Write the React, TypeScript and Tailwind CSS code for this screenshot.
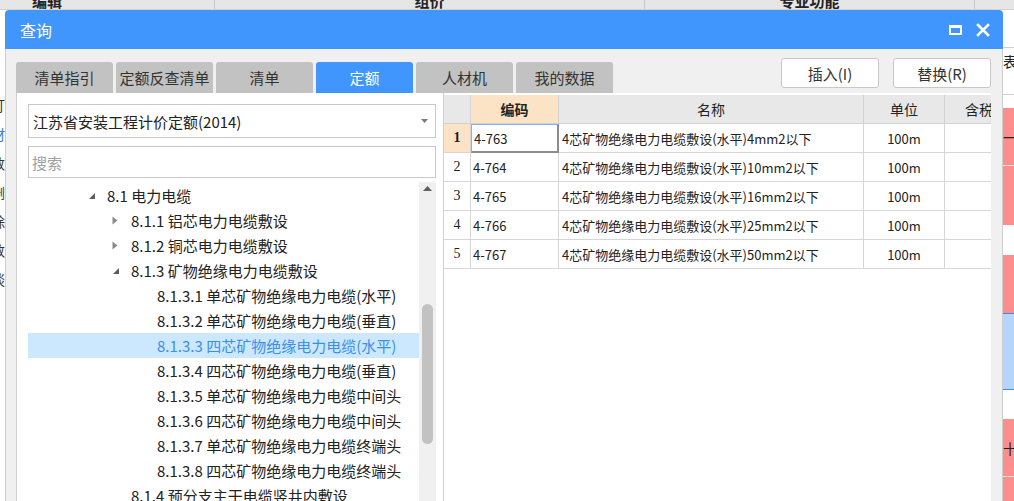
type Tri = 'down' | 'right' | 'none';

const tabs = ['清单指引', '定额反查清单', '清单', '定额', '人材机', '我的数据'];

const tree: { pl: string; tri: Tri; text: string; selected?: boolean }[] = [
  { pl: 'pl-[57px]', tri: 'down', text: '8.1 电力电缆' },
  { pl: 'pl-[81px]', tri: 'right', text: '8.1.1 铝芯电力电缆敷设' },
  { pl: 'pl-[81px]', tri: 'right', text: '8.1.2 铜芯电力电缆敷设' },
  { pl: 'pl-[81px]', tri: 'down', text: '8.1.3 矿物绝缘电力电缆敷设' },
  { pl: 'pl-[129px]', tri: 'none', text: '8.1.3.1 单芯矿物绝缘电力电缆(水平)' },
  { pl: 'pl-[129px]', tri: 'none', text: '8.1.3.2 单芯矿物绝缘电力电缆(垂直)' },
  { pl: 'pl-[129px]', tri: 'none', text: '8.1.3.3 四芯矿物绝缘电力电缆(水平)', selected: true },
  { pl: 'pl-[129px]', tri: 'none', text: '8.1.3.4 四芯矿物绝缘电力电缆(垂直)' },
  { pl: 'pl-[129px]', tri: 'none', text: '8.1.3.5 单芯矿物绝缘电力电缆中间头' },
  { pl: 'pl-[129px]', tri: 'none', text: '8.1.3.6 四芯矿物绝缘电力电缆中间头' },
  { pl: 'pl-[129px]', tri: 'none', text: '8.1.3.7 单芯矿物绝缘电力电缆终端头' },
  { pl: 'pl-[129px]', tri: 'none', text: '8.1.3.8 四芯矿物绝缘电力电缆终端头' },
  { pl: 'pl-[103px]', tri: 'none', text: '8.1.4 预分支主干电缆竖井内敷设' },
];

const rows = [
  { code: '4-763', size: '4' },
  { code: '4-764', size: '10' },
  { code: '4-765', size: '16' },
  { code: '4-766', size: '25' },
  { code: '4-767', size: '50' },
];

const edgeChars = ['订', '材', '数', '删', '除', '数', '谈'];

function Arrow({ tri }: { tri: Tri }) {
  if (tri === 'down') {
    return (
      <svg width="8" height="8" viewBox="0 0 8 8">
        <path d="M7 1 L7 7 L1 7 Z" fill="#5c5c5c" />
      </svg>
    );
  }
  if (tri === 'right') {
    return (
      <svg width="6" height="9" viewBox="0 0 6 9">
        <path d="M0.5 0.5 L5.5 4.5 L0.5 8.5 Z" fill="#8c8c8c" />
      </svg>
    );
  }
  return null;
}

export default function App() {
  return (
    <div className="w-[1014px] h-[501px] overflow-hidden bg-white flex flex-col font-['Noto_Sans_CJK_SC',sans-serif] leading-none">
      {/* background grid header, mostly hidden */}
      <div className="h-[10px] shrink-0 overflow-hidden bg-[#e6e6e6] border-b border-[#d2d2d2] flex">
        <div className="w-[215px] border-r border-[#c8c8c8] flex justify-start pl-[32px] -mt-[9px] h-[19px] items-center text-[15px] font-bold text-[#222]">编辑</div>
        <div className="w-[430px] border-r border-[#c8c8c8] flex justify-center -mt-[9px] h-[19px] items-center text-[15px] font-bold text-[#222]">组价</div>
        <div className="w-[330px] border-r border-[#c8c8c8] flex justify-center -mt-[9px] h-[19px] items-center text-[15px] font-bold text-[#222]">专业功能</div>
        <div className="flex-1" />
      </div>

      <div className="flex flex-1 min-h-0">
        {/* left background fragments */}
        <div className="w-[5px] shrink-0 overflow-hidden flex flex-col pt-[80px]">
          {edgeChars.map((c, i) => (
            <div key={i} className={`h-[29px] flex items-center -ml-[9px] text-[14px] ${i === 1 ? 'text-[#3a7fd5]' : 'text-[#333]'}`}>{c}</div>
          ))}
        </div>

        {/* dialog */}
        <div className="w-[998px] shrink-0 flex flex-col">
          <div className="h-[39px] shrink-0 bg-[#4096fd] rounded-t-[4px] flex items-center pl-[15px] pr-[13px]">
            <span className="text-white text-[16px]">查询</span>
            <div className="flex-1" />
            <div className="w-[13px] h-[10px] border-2 border-t-[3px] border-white" />
            <svg className="ml-[14px]" width="14" height="14" viewBox="0 0 14 14">
              <path d="M2 2 L12 12 M12 2 L2 12" stroke="white" strokeWidth="2.6" strokeLinecap="square" />
            </svg>
          </div>

          <div className="flex-1 min-h-0 bg-[#f0f0f0] border-x border-[#cdcdcd] flex flex-col pl-[10px] pr-[10px] pt-[9px]">
            {/* tabs + buttons */}
            <div className="h-[35px] shrink-0 flex items-start">
              <div className="self-end flex gap-[3px]">
                {tabs.map(t => (
                  <div
                    key={t}
                    className={`w-[97px] h-[31px] rounded-t-[3px] flex items-center justify-center text-[15px] ${
                      t === '定额' ? 'bg-[#4096fd] text-white' : 'bg-[#c2c2c2] text-[#333]'
                    }`}
                  >
                    {t}
                  </div>
                ))}
              </div>
              <div className="flex-1" />
              <button className="w-[98px] h-[30px] bg-white border border-[#c8c8c8] rounded-[3px] text-[15px] text-[#333]">插入(I)</button>
              <button className="ml-[14px] mr-[1px] w-[98px] h-[30px] bg-white border border-[#c8c8c8] rounded-[3px] text-[15px] text-[#333]">替换(R)</button>
            </div>

            {/* content */}
            <div className="flex-1 min-h-0 flex">
              {/* left panel */}
              <div className="w-[428px] shrink-0 bg-white border-l border-r border-[#d0d0d0] flex flex-col pl-[11px] pr-[7px] pt-[11px]">
                <div className="h-[34px] shrink-0 border border-[#c9c9c9] flex items-center pl-[4px] pr-[7px] text-[15px] text-[#222]">
                  <span>江苏省安装工程计价定额(2014)</span>
                  <div className="flex-1" />
                  <svg width="7" height="4" viewBox="0 0 7 4">
                    <path d="M0 0 L7 0 L3.5 4 Z" fill="#7a7a7a" />
                  </svg>
                </div>
                <div className="mt-[8px] h-[32px] shrink-0 border border-[#c9c9c9] flex items-center pl-[3px] text-[15px] text-[#a0a0a0]">搜索</div>

                <div className="mt-[4px] flex-1 min-h-0 flex">
                  <div className="flex-1 pt-[1px] overflow-hidden">
                    {tree.map(r => (
                      <div
                        key={r.text}
                        className={`h-[25px] flex items-center whitespace-nowrap text-[15px] ${r.pl} ${
                          r.selected ? 'bg-[#cce8ff] text-[#3d8ee8]' : 'text-[#222]'
                        }`}
                      >
                        {r.tri !== 'none' && (
                          <div className="w-[22px] flex items-center pl-[3px]">
                            <Arrow tri={r.tri} />
                          </div>
                        )}
                        <span>{r.text}</span>
                      </div>
                    ))}
                  </div>
                  <div className="w-[17px] shrink-0 bg-[#f0f0f0] flex flex-col items-center pt-[4px]">
                    <svg width="9" height="5" viewBox="0 0 9 5">
                      <path d="M0 5 L4.5 0 L9 5 Z" fill="#606060" />
                    </svg>
                    <div className="mt-[113px] w-[11px] h-[140px] rounded-full bg-[#c2c2c2]" />
                  </div>
                </div>
              </div>

              {/* table panel */}
              <div className="w-[547px] shrink-0 bg-white pt-[2px] flex flex-col text-[#222]">
                <div className="h-[29px] flex bg-[#e8e8e8] text-[14px]">
                  <div className="w-[27px] border-r border-b border-[#d2d2d2]" />
                  <div className="w-[88px] border-r border-b border-[#d2d2d2] bg-[#fde3c5] flex items-center justify-center font-bold">编码</div>
                  <div className="w-[305px] border-r border-b border-[#d2d2d2] flex items-center justify-center">名称</div>
                  <div className="w-[81px] border-r border-b border-[#d2d2d2] flex items-center justify-center">单位</div>
                  <div className="w-[46px] border-b border-[#d2d2d2] flex items-center pl-[20px] overflow-hidden whitespace-nowrap">含税单价</div>
                </div>
                {rows.map((r, i) => (
                  <div key={r.code} className="h-[29px] flex text-[13px]">
                    <div
                      className={`w-[27px] border-r border-b border-[#d6d6d6] flex items-center justify-center font-['Liberation_Serif',serif] text-[14px] ${
                        i === 0 ? 'bg-[#fde3c5] font-bold' : ''
                      }`}
                    >
                      {i + 1}
                    </div>
                    <div
                      className={`w-[88px] flex items-center pl-[2px] ${
                        i === 0
                          ? 'border-t border-l border-[#7fb2ee] border-r-2 border-r-[#8c8c8c] border-b-2 border-b-[#8c8c8c]'
                          : 'border-r border-b border-[#d6d6d6]'
                      }`}
                    >
                      {r.code}
                    </div>
                    <div className="w-[305px] border-r border-b border-[#d6d6d6] flex items-center pl-[3px] whitespace-nowrap">
                      4芯矿物绝缘电力电缆敷设(水平){r.size}mm2以下
                    </div>
                    <div className="w-[81px] border-r border-b border-[#d6d6d6] flex items-center justify-center">100m</div>
                    <div className="w-[46px] border-b border-[#d6d6d6]" />
                  </div>
                ))}
              </div>
            </div>
          </div>
        </div>

        {/* right background fragments */}
        <div className="w-[11px] shrink-0 flex flex-col overflow-hidden text-[14px] text-[#222]">
          <div className="h-[38px] border-b border-[#d0d0d0]" />
          <div className="h-[47px] border-b border-[#d0d0d0] pt-[6px] overflow-hidden whitespace-nowrap">表</div>
          <div className="h-[13px]" />
          <div className="h-[58px] bg-[#fe8e8e] border-b border-[#e2e2e2] flex items-center">一</div>
          <div className="h-[59px] bg-[#fe8e8e]" />
          <div className="h-[30px]" />
          <div className="h-[58px] bg-[#fe8e8e]" />
          <div className="h-[77px] bg-[#b6d5fb] border-y border-[#3a8ee6]" />
          <div className="h-[29px]" />
          <div className="h-[58px] bg-[#fe8e8e] border-b border-[#e2e2e2] flex items-center">十</div>
          <div className="flex-1 bg-[#fe8e8e]" />
        </div>
      </div>
    </div>
  );
}
